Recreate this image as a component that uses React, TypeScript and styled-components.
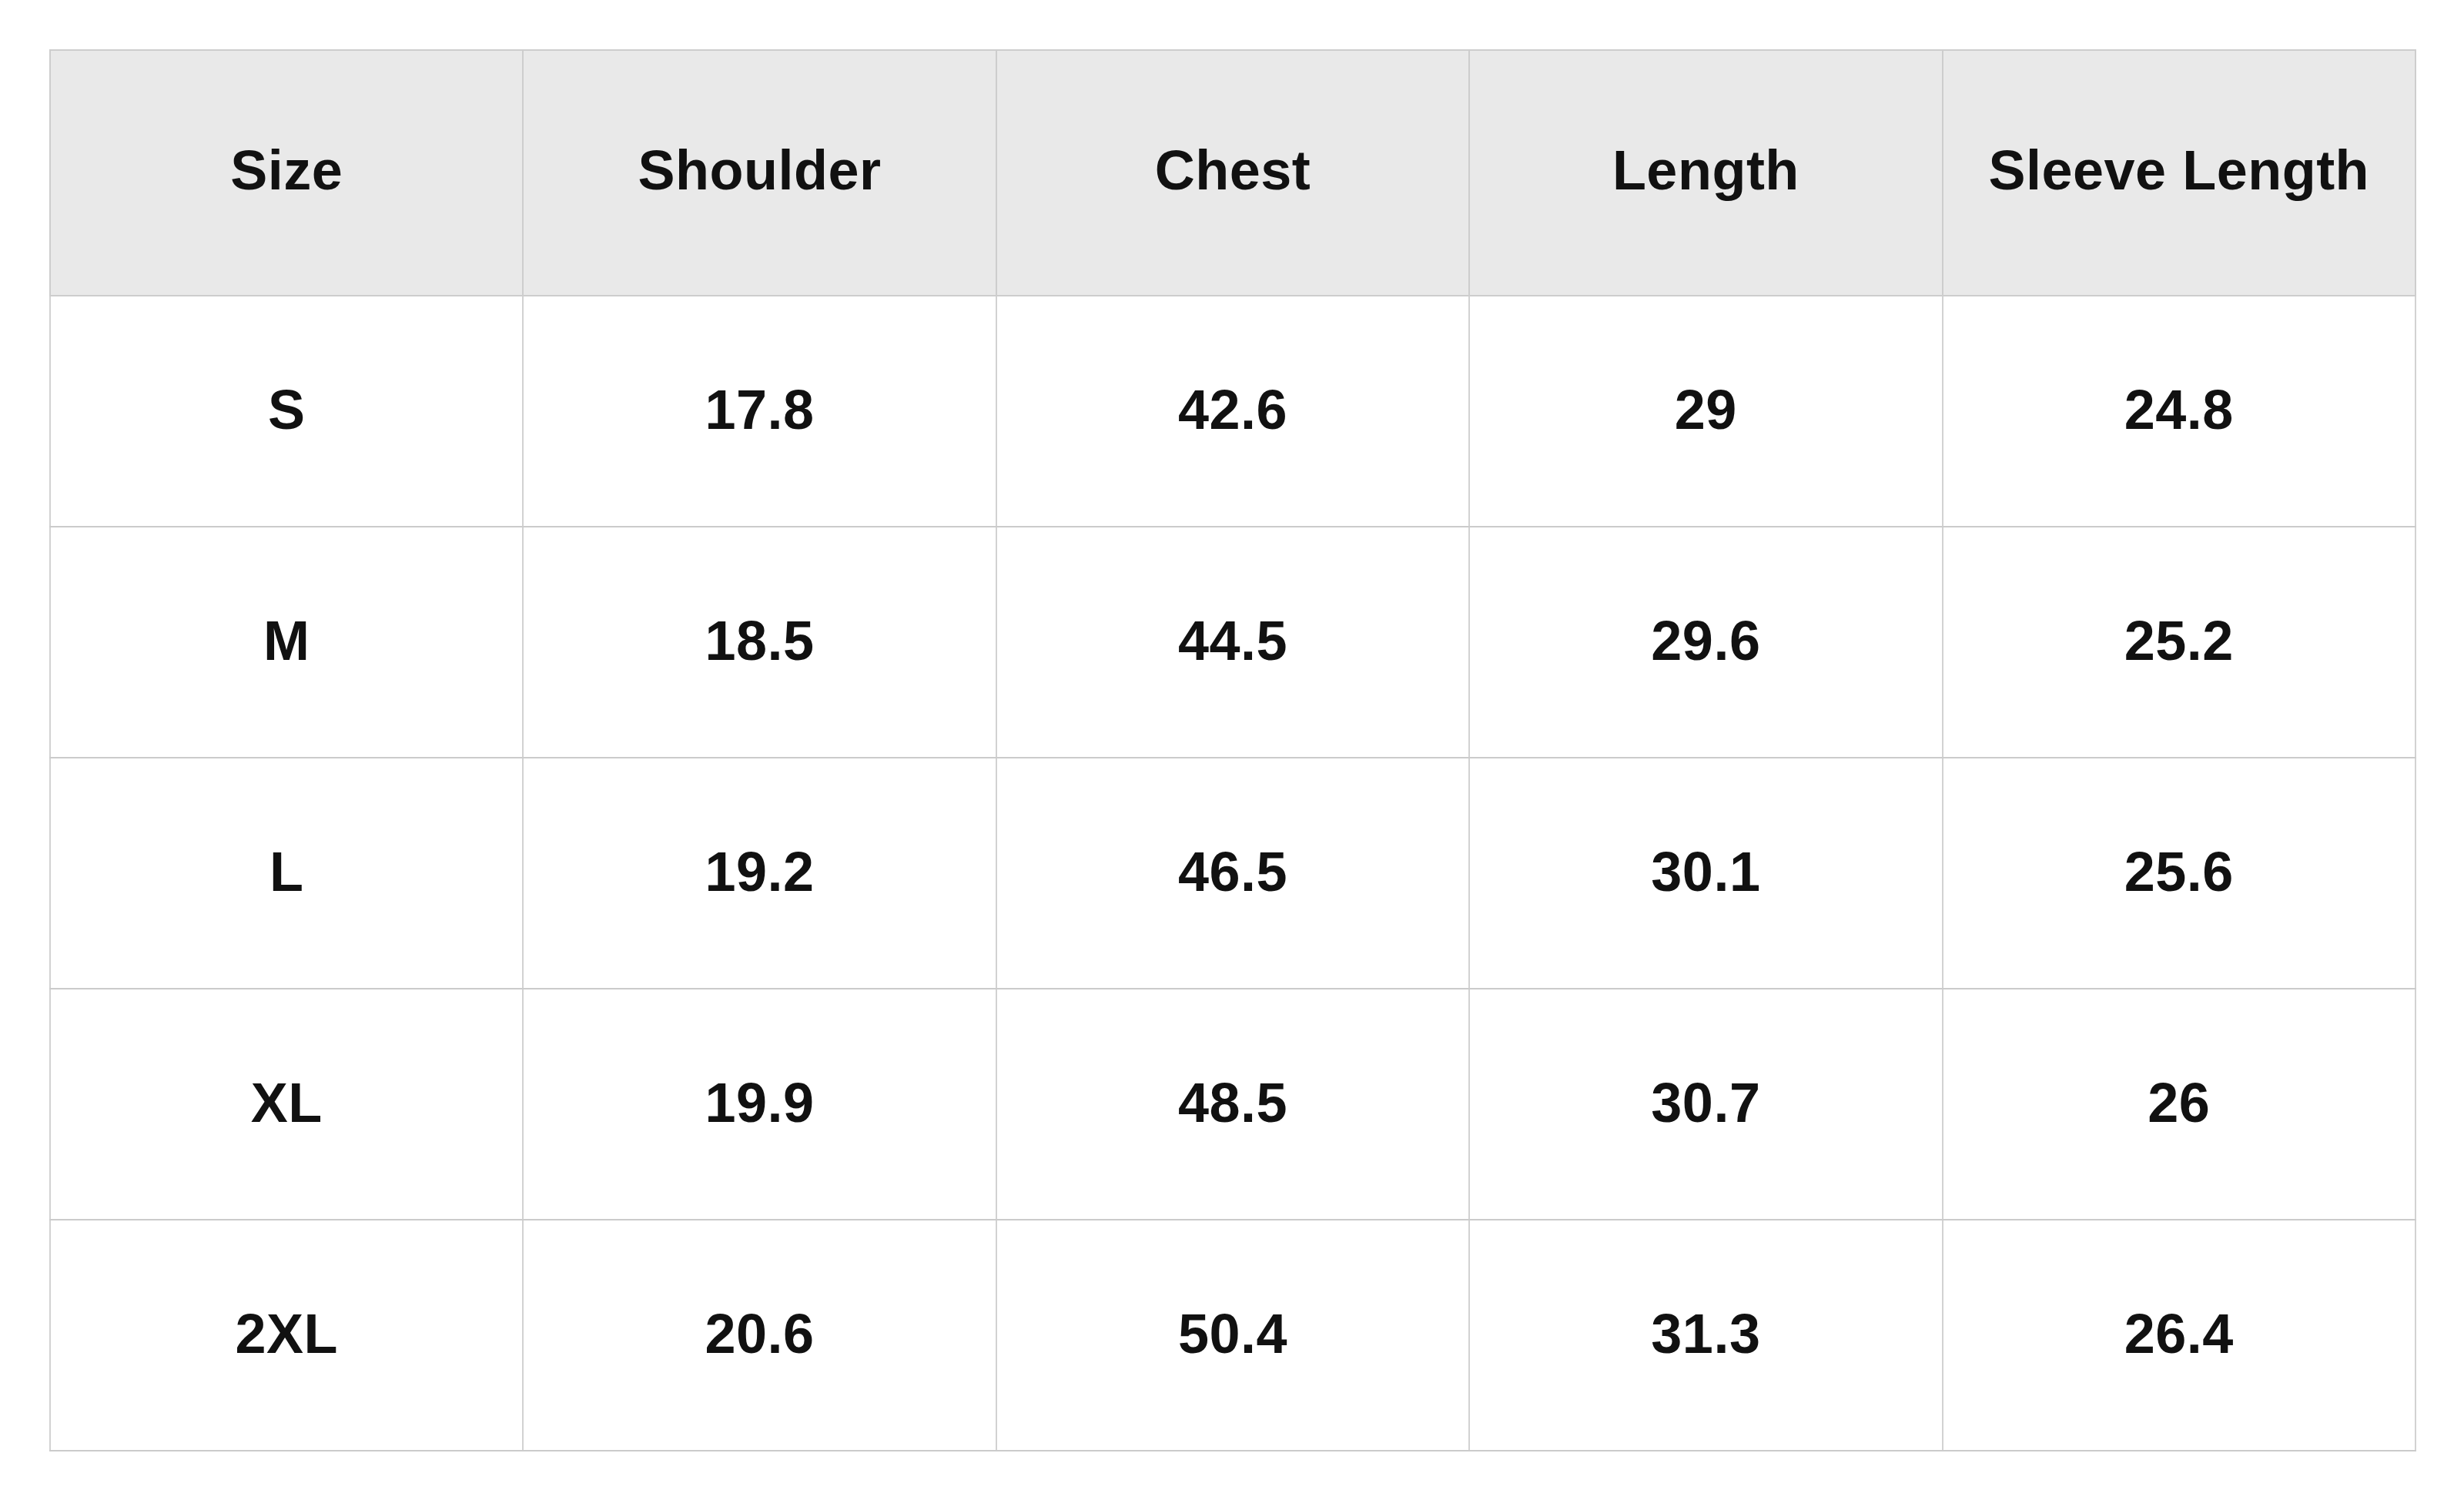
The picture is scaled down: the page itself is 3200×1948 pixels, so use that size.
import React from "react";
import styled, { createGlobalStyle } from "styled-components";

const GlobalStyle = createGlobalStyle`
  html, body {
    margin: 0;
    padding: 0;
    background: #ffffff;
  }
  body {
    font-family: "Liberation Sans", Arial, sans-serif;
  }
`;

const Page = styled.div`
  padding: 64px 63px 63px 64px;
  background: #fff;
`;

const Table = styled.table`
  width: 3074px;
  border-collapse: collapse;
  table-layout: fixed;
  border: 2px solid #cdcdcd;
`;

const HeadCell = styled.th`
  height: 309px;
  padding: 0 0 8px;
  background: #e9e9e9;
  border: 2px solid #cdcdcd;
  color: #111111;
  font-size: 72px;
  font-weight: 700;
  letter-spacing: 0.5px;
  text-align: center;
  vertical-align: middle;
`;

const Cell = styled.td`
  height: 294px;
  padding: 0 0 4px;
  background: #ffffff;
  border: 2px solid #d2d2d2;
  border-top-color: #cbcbcb;
  border-bottom-color: #cbcbcb;
  color: #111111;
  font-size: 72px;
  font-weight: 700;
  letter-spacing: 0.5px;
  text-align: center;
  vertical-align: middle;
`;

const columns = ["Size", "Shoulder", "Chest", "Length", "Sleeve Length"];

const rows = [
  ["S", "17.8", "42.6", "29", "24.8"],
  ["M", "18.5", "44.5", "29.6", "25.2"],
  ["L", "19.2", "46.5", "30.1", "25.6"],
  ["XL", "19.9", "48.5", "30.7", "26"],
  ["2XL", "20.6", "50.4", "31.3", "26.4"],
];

const App = () => {
  return (
    <>
      <GlobalStyle />
      <Page>
        <Table>
          <thead>
            <tr>
              {columns.map((c) => (
                <HeadCell key={c}>{c}</HeadCell>
              ))}
            </tr>
          </thead>
          <tbody>
            {rows.map((r) => (
              <tr key={r[0]}>
                {r.map((v, i) => (
                  <Cell key={i}>{v}</Cell>
                ))}
              </tr>
            ))}
          </tbody>
        </Table>
      </Page>
    </>
  );
};

export default App;
